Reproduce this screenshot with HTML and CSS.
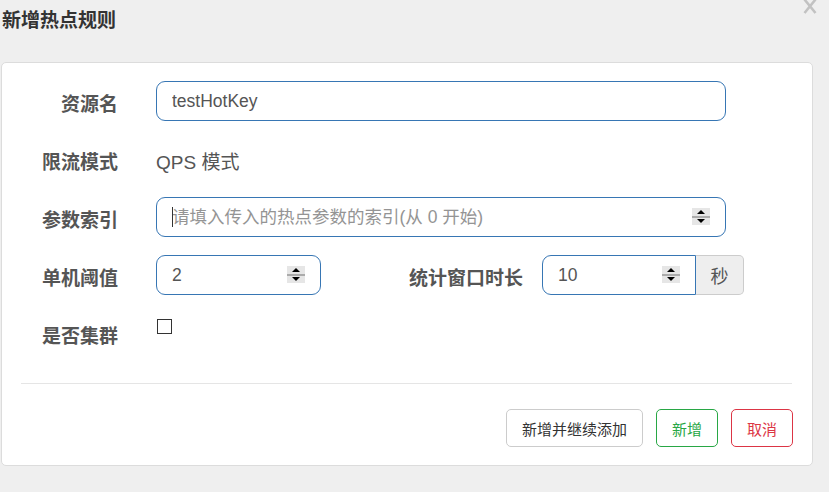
FILE: index.html
```html
<!DOCTYPE html>
<html lang="zh-CN">
<head>
<meta charset="utf-8">
<title>新增热点规则</title>
<link rel="stylesheet" href="styles.css">
</head>
<body>
<div class="dialog">
  <button class="close" type="button" aria-label="关闭">
    <svg width="14" height="14" viewBox="0 0 14 14"><path d="M1.5 -0.5 L12.5 13 M12.5 -0.5 L1.5 13" stroke="#c2c2c2" stroke-width="2.6" fill="none"/></svg>
  </button>
  <h4 class="title">新增热点规则</h4>
  <div class="card">
    <div class="form">
      <div class="row">
        <label class="lbl">资源名</label>
        <div class="field wide"><input class="ctl" type="text" value="testHotKey"></div>
      </div>
      <div class="row">
        <label class="lbl">限流模式</label>
        <div class="static">QPS 模式</div>
      </div>
      <div class="row">
        <label class="lbl">参数索引</label>
        <div class="field wide">
          <input class="ctl" type="text" placeholder="请填入传入的热点参数的索引(从 0 开始)">
          <span class="caret"></span>
          <span class="spin"><span class="up"></span><span class="down"></span></span>
        </div>
      </div>
      <div class="row">
        <label class="lbl">单机阈值</label>
        <div class="field short">
          <input class="ctl" type="text" value="2">
          <span class="spin"><span class="up"></span><span class="down"></span></span>
        </div>
        <label class="lbl lbl2">统计窗口时长</label>
        <div class="group">
          <div class="field mid">
            <input class="ctl left" type="text" value="10">
            <span class="spin"><span class="up"></span><span class="down"></span></span>
          </div>
          <span class="addon">秒</span>
        </div>
      </div>
      <div class="row">
        <label class="lbl">是否集群</label>
        <div class="check"><span class="box"></span></div>
      </div>
    </div>
    <div class="divider"></div>
    <div class="actions">
      <button class="btn btn-default" type="button">新增并继续添加</button>
      <button class="btn btn-success" type="button">新增</button>
      <button class="btn btn-danger" type="button">取消</button>
    </div>
  </div>
</div>
</body>
</html>
```
FILE: styles.css
```css
* { box-sizing: border-box; }
html, body {
  margin: 0;
  padding: 0;
  background: #efefef;
  font-family: "Liberation Sans", "Noto Sans CJK SC", sans-serif;
  color: #555;
}
.dialog {
  position: relative;
  width: 829px;
  height: 492px;
  padding: 9px 0 0 1px;
}
.close {
  position: absolute;
  top: 0;
  left: 803px;
  width: 14px;
  height: 14px;
  padding: 0;
  border: 0;
  background: transparent;
  line-height: 0;
}
.title {
  margin: 0 0 0 1px;
  height: 53px;
  font-size: 19px;
  line-height: 24px;
  font-weight: bold;
  color: #333;
}
.card {
  width: 812px;
  height: 404px;
  background: #fff;
  border: 1px solid #dcdcdc;
  border-radius: 5px;
  padding: 18px 20px 18px 19px;
}
.form {
  display: flex;
  flex-direction: column;
  gap: 18px;
}
.row {
  display: flex;
  height: 40px;
}
.lbl {
  width: 97px;
  margin-right: 38px;
  text-align: right;
  font-size: 19px;
  line-height: 24px;
  padding-top: 12px;
  font-weight: bold;
  color: #555;
  white-space: nowrap;
}
.lbl2 {
  width: 202px;
  margin-right: 19px;
}
.field {
  position: relative;
  height: 40px;
}
.wide { width: 570px; }
.short { width: 165px; }
.mid { width: 154px; }
.ctl {
  display: block;
  width: 100%;
  height: 40px;
  border: 1px solid #3776b4;
  border-radius: 9px;
  padding: 0 15px;
  font-family: "Liberation Sans", "Noto Sans CJK SC", sans-serif;
  font-size: 17.5px;
  color: #555;
  background: #fff;
  outline: none;
}
.ctl::placeholder { color: #949494; }
.ctl.left { border-radius: 9px 0 0 9px; }
.caret {
  position: absolute;
  left: 16px;
  top: 10px;
  width: 1px;
  height: 20px;
  background: #333;
}
.spin {
  position: absolute;
  right: 16px;
  top: 11px;
  width: 18px;
  height: 17px;
  background: #e6e6e6;
  display: flex;
  flex-direction: column;
}
.spin .up, .spin .down {
  flex: 1;
  display: flex;
  align-items: center;
  justify-content: center;
}
.spin .up { border-bottom: 2px solid #ababab; }
.spin .up::after {
  content: "";
  border-left: 4px solid transparent;
  border-right: 4px solid transparent;
  border-bottom: 4px solid #000;
}
.spin .down::after {
  content: "";
  border-left: 4px solid transparent;
  border-right: 4px solid transparent;
  border-top: 4px solid #000;
}
.static {
  font-size: 19px;
  line-height: 24px;
  padding-top: 12px;
  color: #555;
}
.group {
  display: flex;
  height: 40px;
}
.addon {
  width: 48px;
  height: 40px;
  background: #eee;
  border: 1px solid #ccc;
  border-left: 0;
  border-radius: 0 5px 5px 0;
  display: flex;
  align-items: center;
  justify-content: center;
  font-size: 18px;
  color: #555;
}
.check {
  padding: 6px 0 0 1px;
}
.box {
  display: block;
  width: 15px;
  height: 15px;
  border: 1.6px solid #333;
  background: #fff;
}
.divider {
  height: 1px;
  background: #e5e5e5;
  margin: 30px 0 0 0;
}
.actions {
  display: flex;
  justify-content: flex-end;
  gap: 13px;
  padding-top: 25px;
  margin-right: -1px;
}
.btn {
  height: 38px;
  padding: 0 15px;
  border: 1px solid #ccc;
  border-radius: 5px;
  background: #fff;
  font-family: "Liberation Sans", "Noto Sans CJK SC", sans-serif;
  font-size: 15px;
  color: #333;
}
.btn-success { border-color: #28a745; color: #28a745; }
.btn-danger { border-color: #dc3545; color: #dc3545; }
```
